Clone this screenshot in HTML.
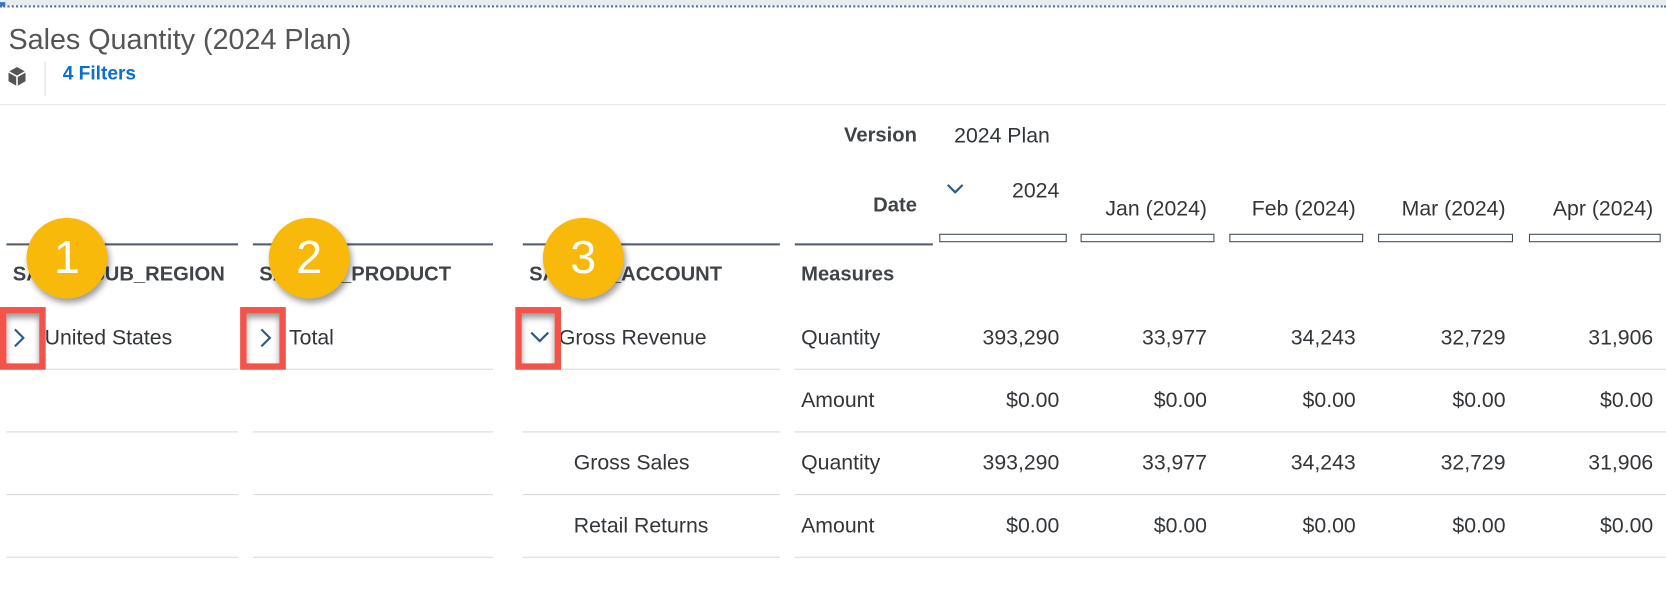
<!DOCTYPE html>
<html><head><meta charset="utf-8"><style>
*{margin:0;padding:0;box-sizing:border-box}
body{width:1666px;height:616px;background:#fff;font-family:"Liberation Sans",sans-serif;color:#32363a;position:relative;overflow:hidden}
#w{position:absolute;left:0;top:0;width:1568px;height:580px;transform:scale(1.0625);transform-origin:0 0}
.a{position:absolute;white-space:nowrap}
.t{font-size:20px;color:#32363a}
.b{font-weight:bold;font-size:19px;color:#404448}
.r{text-align:right}
.hl{position:absolute;height:1px;background:#d9d9d9}
.dl{position:absolute;height:1.5px;background:#556070}
.box{position:absolute;top:220px;height:8px;border:1.5px solid #3d4a5a}
.badge{position:absolute;width:76px;height:76px;border-radius:50%;background:#f9b90b;color:#fff;font-size:44px;text-align:center;line-height:76px;box-shadow:2px 4px 6px rgba(0,0,0,.4)}
.red{position:absolute;border:6px solid #f4534a;width:43px;height:59px;box-shadow:inset 0 4px 6px rgba(0,0,0,.4)}
</style></head><body><div id="w">
<div style="position:absolute;top:0;left:0;width:1568px;height:5px;background:#e8ecef"></div>
<div style="position:absolute;top:5px;left:0;width:1568px;height:2px;border-top:2px dotted #4a6fa0"></div>
<div style="position:absolute;top:2px;left:0;width:5px;height:4px;background:#3b78c0"></div>
<div class="a" style="left:8px;top:22px;font-size:27px;color:#555">Sales Quantity (2024 Plan)</div>
<svg class="a" style="left:7px;top:62px" width="18" height="20" viewBox="0 0 18 20"><path d="M9 1 L17 5.5 V14.5 L9 19 L1 14.5 V5.5Z" fill="#555"/><path d="M1 5.5 L9 10 L17 5.5 M9 10 V19" stroke="#fff" stroke-width="1.5" fill="none"/></svg>
<div style="position:absolute;left:42px;top:58px;width:1px;height:32px;background:#ddd"></div>
<div class="a" style="left:59px;top:59px;font-size:18px;font-weight:bold;color:#0a6ed1">4 Filters</div>
<div class="hl" style="top:98px;left:0;width:1568px;background:#e5e5e5"></div>

<div class="a b r" style="left:740px;width:123px;top:117px">Version</div>
<div class="a t" style="left:898px;top:117px">2024 Plan</div>
<div class="a b r" style="left:740px;width:123px;top:183px">Date</div>
<svg class="a" style="left:890px;top:172px" width="18" height="12"><path d="M2 2 L9 9 L16 2" stroke="#2b5a8a" stroke-width="2" fill="none"/></svg>
<div class="a t r" style="left:900px;width:97px;top:169px">2024</div>
<div class="a t r" style="left:1010px;width:126px;top:186px">Jan (2024)</div>
<div class="a t r" style="left:1150px;width:126px;top:186px">Feb (2024)</div>
<div class="a t r" style="left:1290px;width:127px;top:186px">Mar (2024)</div>
<div class="a t r" style="left:1430px;width:126px;top:186px">Apr (2024)</div>
<div class="box" style="left:884px;width:120px"></div>
<div class="box" style="left:1017px;width:126px"></div>
<div class="box" style="left:1157px;width:126px"></div>
<div class="box" style="left:1297px;width:127px"></div>
<div class="box" style="left:1439px;width:124px"></div>

<div class="dl" style="top:229px;left:6px;width:218px"></div>
<div class="dl" style="top:229px;left:238px;width:226px"></div>
<div class="dl" style="top:229px;left:492px;width:242px"></div>
<div class="dl" style="top:229px;left:748px;width:130px"></div>

<div class="a b" style="left:12px;top:248px">SALES_SUB_REGION</div>
<div class="a b" style="left:244px;top:248px">SAP_SA_PRODUCT</div>
<div class="a b" style="left:498px;top:248px">SAP_SA_ACCOUNT</div>
<div class="a b" style="left:754px;top:248px">Measures</div>

<div class="hl" style="top:347px;left:6px;width:218px"></div><div class="hl" style="top:347px;left:238px;width:226px"></div><div class="hl" style="top:347px;left:492px;width:242px"></div><div class="hl" style="top:347px;left:748px;width:820px"></div>
<div class="hl" style="top:406px;left:6px;width:218px"></div><div class="hl" style="top:406px;left:238px;width:226px"></div><div class="hl" style="top:406px;left:492px;width:242px"></div><div class="hl" style="top:406px;left:748px;width:820px"></div>
<div class="hl" style="top:465px;left:6px;width:218px"></div><div class="hl" style="top:465px;left:238px;width:226px"></div><div class="hl" style="top:465px;left:492px;width:242px"></div><div class="hl" style="top:465px;left:748px;width:820px"></div>
<div class="hl" style="top:524px;left:6px;width:218px"></div><div class="hl" style="top:524px;left:238px;width:226px"></div><div class="hl" style="top:524px;left:492px;width:242px"></div><div class="hl" style="top:524px;left:748px;width:820px"></div>

<div class="a t" style="left:42px;top:307px">United States</div>
<div class="a t" style="left:272px;top:307px">Total</div>
<div class="a t" style="left:526px;top:307px">Gross Revenue</div>
<div class="a t" style="left:540px;top:425px">Gross Sales</div>
<div class="a t" style="left:540px;top:484px">Retail Returns</div>
<div class="a t" style="left:754px;top:307px">Quantity</div>
<div class="a t" style="left:754px;top:366px">Amount</div>
<div class="a t" style="left:754px;top:425px">Quantity</div>
<div class="a t" style="left:754px;top:484px">Amount</div>

<div class="a t r" style="left:880px;width:117px;top:307px">393,290</div><div class="a t r" style="left:1010px;width:126px;top:307px">33,977</div><div class="a t r" style="left:1150px;width:126px;top:307px">34,243</div><div class="a t r" style="left:1290px;width:127px;top:307px">32,729</div><div class="a t r" style="left:1430px;width:126px;top:307px">31,906</div>
<div class="a t r" style="left:880px;width:117px;top:366px">$0.00</div><div class="a t r" style="left:1010px;width:126px;top:366px">$0.00</div><div class="a t r" style="left:1150px;width:126px;top:366px">$0.00</div><div class="a t r" style="left:1290px;width:127px;top:366px">$0.00</div><div class="a t r" style="left:1430px;width:126px;top:366px">$0.00</div>
<div class="a t r" style="left:880px;width:117px;top:425px">393,290</div><div class="a t r" style="left:1010px;width:126px;top:425px">33,977</div><div class="a t r" style="left:1150px;width:126px;top:425px">34,243</div><div class="a t r" style="left:1290px;width:127px;top:425px">32,729</div><div class="a t r" style="left:1430px;width:126px;top:425px">31,906</div>
<div class="a t r" style="left:880px;width:117px;top:484px">$0.00</div><div class="a t r" style="left:1010px;width:126px;top:484px">$0.00</div><div class="a t r" style="left:1150px;width:126px;top:484px">$0.00</div><div class="a t r" style="left:1290px;width:127px;top:484px">$0.00</div><div class="a t r" style="left:1430px;width:126px;top:484px">$0.00</div>

<div class="red" style="left:0;top:289px"></div>
<div class="red" style="left:226px;top:289px"></div>
<div class="red" style="left:485px;top:289px"></div>
<svg class="a" style="left:12px;top:308px" width="12" height="20"><path d="M2 2 L10 10 L2 18" stroke="#2b5a8a" stroke-width="2" fill="none"/></svg>
<svg class="a" style="left:244px;top:308px" width="12" height="20"><path d="M2 2 L10 10 L2 18" stroke="#2b5a8a" stroke-width="2" fill="none"/></svg>
<svg class="a" style="left:498px;top:311px" width="20" height="12"><path d="M2 2 L10 10 L18 2" stroke="#2b5a8a" stroke-width="2" fill="none"/></svg>

<div class="badge" style="left:25px;top:205px">1</div>
<div class="badge" style="left:253px;top:205px">2</div>
<div class="badge" style="left:511px;top:205px">3</div>
</div></body></html>
